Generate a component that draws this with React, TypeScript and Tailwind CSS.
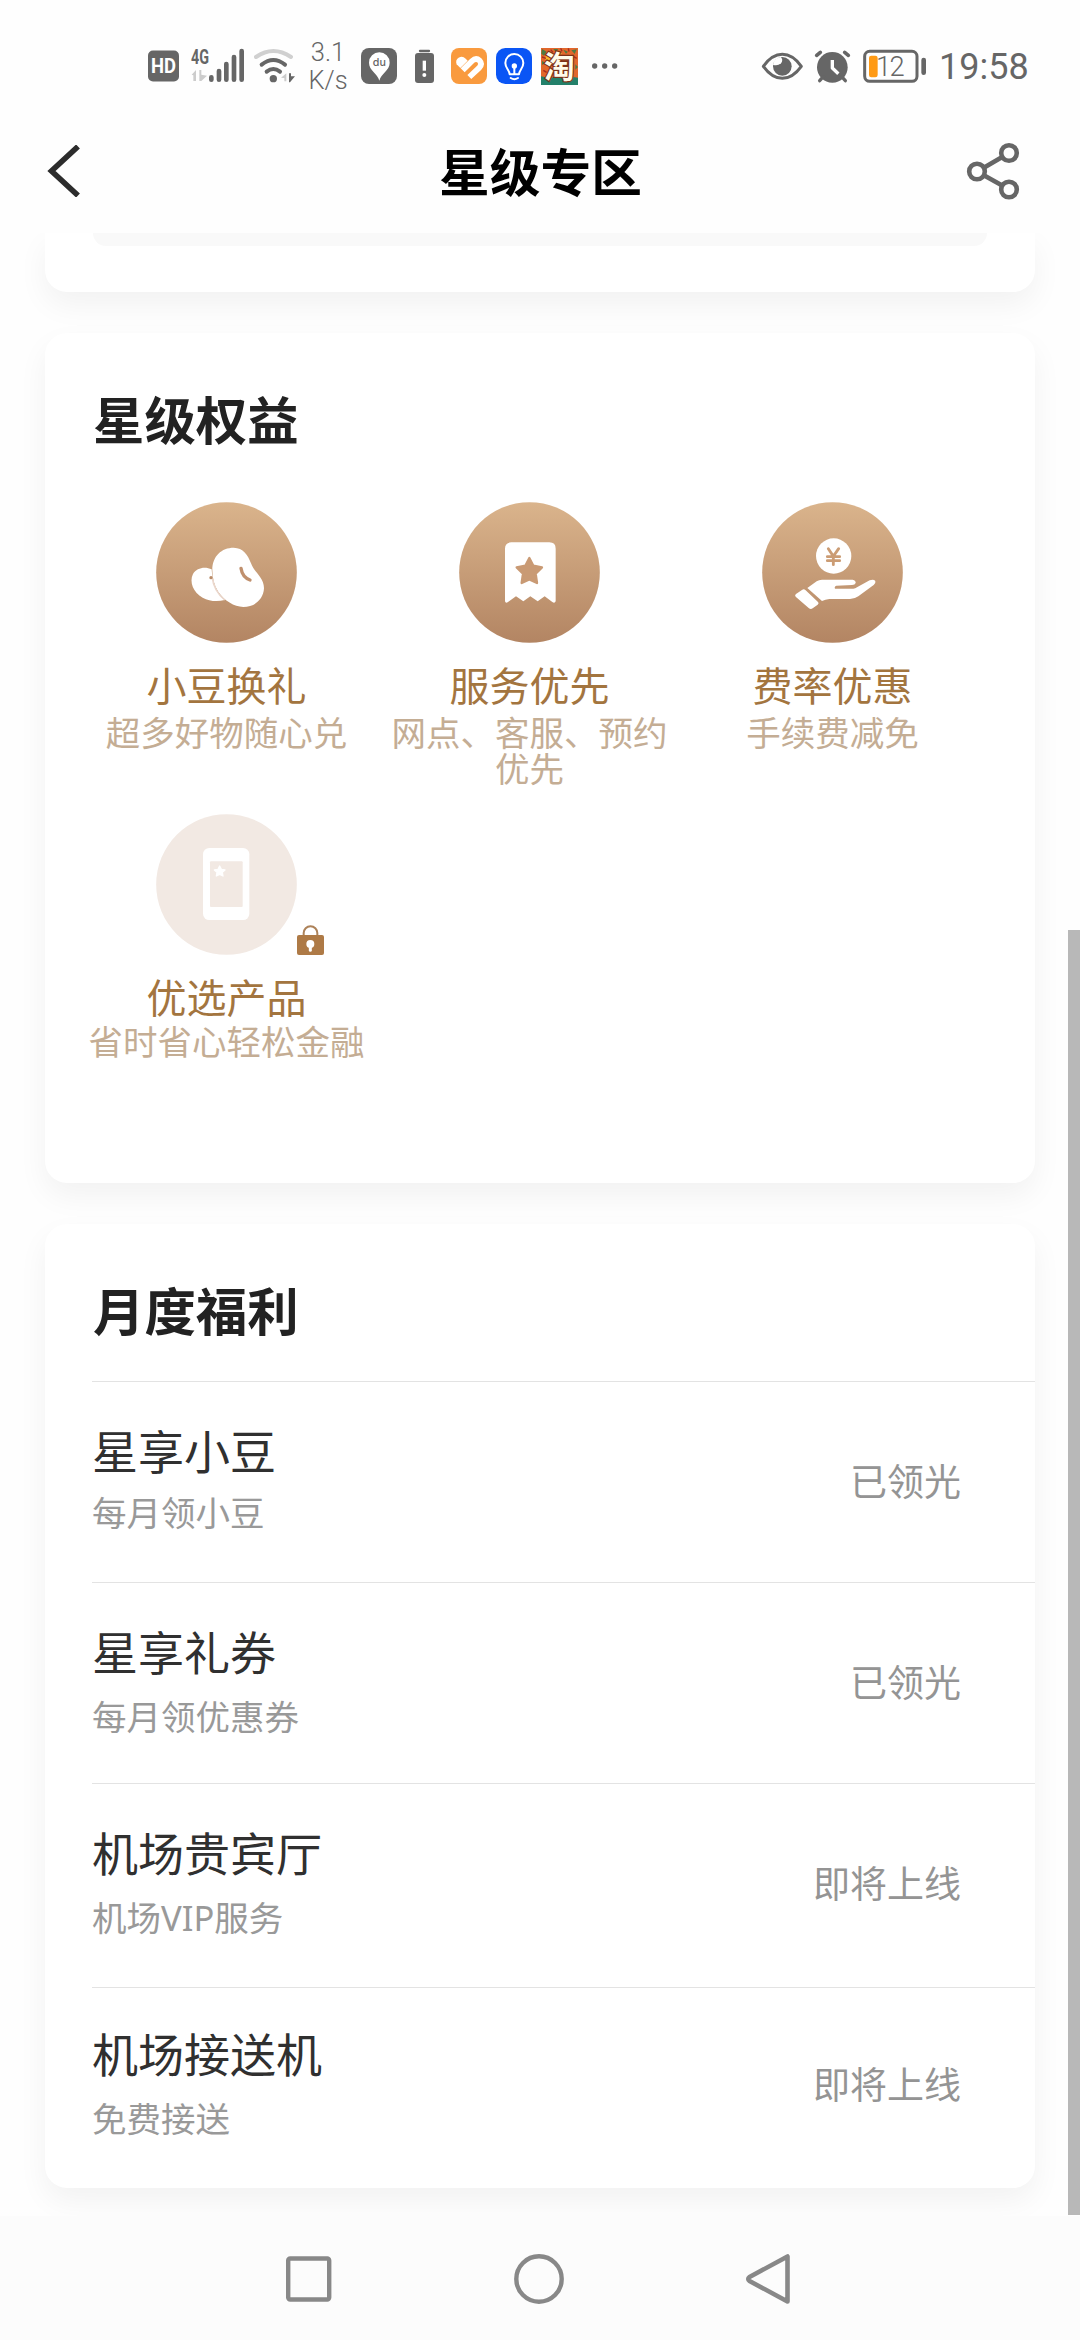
import type { ReactNode } from "react";

const CIRCLE_TOP = "#dab48c";
const CIRCLE_BOTTOM = "#b38563";

function StatusBar() {
  return (
    <div className="flex h-[132px] shrink-0 items-center whitespace-nowrap text-[#666666]">
      <svg className="ml-[148px] h-[32px] w-[31px]" viewBox="0 0 31 32">
        <rect x="0" y="0.5" width="31" height="31" rx="5" fill="#666" />
        <text x="15.5" y="23.4" textAnchor="middle" textLength="25" lengthAdjust="spacingAndGlyphs" fontFamily="Roboto, sans-serif" fontWeight="700" fontSize="20" fill="#fff">HD</text>
      </svg>
      <svg className="ml-[11px] h-[36px] w-[55px] overflow-visible" viewBox="180 54 165 108">
        <text x="183" y="101" textLength="54" lengthAdjust="spacingAndGlyphs" fontFamily="Roboto, sans-serif" fontWeight="700" fontSize="60" fill="#666">4G</text>
        <path d="M185 134 L198 120 V153 H190 V136 Z M208 120 H214 V134 L231 137 L214 153 H208 Z" fill="#ccc" />
        <g stroke="#666" strokeWidth="14" strokeLinecap="round">
          <path d="M244 142V149M267 123V149M289 102V149M312 81V149M335 63V149" />
        </g>
      </svg>
      <svg className="ml-[9px] h-[36px] w-[42px]" viewBox="372 54 126 108" fill="none" strokeLinecap="round">
        <path d="M378 81 Q430 45 483 81" stroke="#d0d0d0" strokeWidth="12" />
        <path d="M395 104 Q430 76 465 104" stroke="#666" strokeWidth="12" />
        <path d="M410 125 Q430 109 450 125" stroke="#666" strokeWidth="12" />
        <circle cx="430" cy="146" r="11" fill="#666" />
        <path d="M453 143 L469 130 V154 H463 V144 Z" fill="#ccc" />
        <path d="M477 130 H483 V139 L495 139 L480 157 H477 Z" fill="#666" />
      </svg>
      <div className="ml-[14px] flex w-[36px] flex-col items-center font-['Roboto'] text-[25.5px] leading-[28px] font-light">
        <span>3.1</span>
        <span>K/s</span>
      </div>
      <svg className="ml-[15px] h-[36px] w-[36px] overflow-visible" viewBox="33 54 108 108">
        <rect x="33" y="54" width="108" height="108" rx="24" fill="#666" />
        <path d="M88 152 C83 130 57 122 57 98 A31 31 0 0 1 119 98 C119 122 93 130 88 152 Z" fill="#fff" />
        <text x="88" y="108" textAnchor="middle" fontFamily="Inter, sans-serif" fontWeight="500" fontSize="32" fill="#666">du</text>
      </svg>
      <svg className="ml-[17px] h-[36px] w-[21px]" viewBox="192 54 63 108">
        <path d="M210 63H237" stroke="#666" strokeWidth="7" strokeLinecap="round" />
        <rect x="195" y="69" width="57" height="90" rx="9" fill="#666" />
        <path d="M223 92V122" stroke="#fff" strokeWidth="10" />
        <circle cx="223" cy="135" r="6" fill="#fff" />
      </svg>
      <svg className="ml-[16px] h-[36px] w-[36px]" viewBox="303 54 108 108">
        <rect x="303" y="54" width="108" height="108" rx="24" fill="#f99a3e" />
        <path d="M320 103 Q315 90 326 83 Q338 77 347 86 L353 92 L331 114 Z" fill="#fff" />
        <path d="M338 121 L366 93 Q378 82 389 92 Q398 102 388 113 L358 141" fill="none" stroke="#fff" strokeWidth="17" />
      </svg>
      <svg className="ml-[9px] h-[36px] w-[36px]" viewBox="438 54 108 108" fill="none">
        <rect x="438" y="54" width="108" height="108" rx="28" fill="#0a55f5" />
        <g stroke="#fff" strokeWidth="6" strokeLinecap="round" strokeLinejoin="round">
          <path d="M479 133 C479 120 466 116 466 99 A27 27 0 0 1 520 99 C520 116 507 120 507 133 Z" />
          <path d="M482 144 Q493 151 504 144" />
          <path d="M493 110V131" />
        </g>
        <circle cx="493" cy="108" r="8" fill="#fff" />
      </svg>
      <svg className="ml-[9px] h-[37px] w-[37px] overflow-visible" viewBox="573 51 111 111">
        <rect x="573" y="51" width="111" height="111" fill="#e2672c" />
        <path d="M573 136 L600 142 L630 132 L684 140 V162 H573 Z" fill="#23806a" />
        <path d="M576 54 l14 8 -8 12 -8 -6z M610 54 h14 l-5 11z M640 56 l14 6 -6 6z M664 58 l16 -3 -6 14z M576 90 l10 5 -10 7z M676 100 l8 8 -8 8z" fill="#4f7b42" />
        <path d="M590 66 l18 10 -14 16 -10 -8z M658 70 l14 4 -4 9z M628 62 l8 6 -8 4z" fill="#f8b52e" />
        <path d="M602 56 l7 8M632 52 l4 9M655 52 l2 10M670 76 l10 6M576 78 l12 4M580 118 l10 6" stroke="#a92d20" strokeWidth="4" />
        <text x="628" y="142" textAnchor="middle" fontFamily="'Noto Sans CJK SC', sans-serif" fontWeight="700" fontSize="92" fill="#fffbea" stroke="#7c3219" strokeWidth="7" paintOrder="stroke">淘</text>
      </svg>
      <svg className="ml-[14px] h-[10px] w-[26px]" viewBox="726 93 78 30" fill="#666">
        <circle cx="734" cy="108" r="8" />
        <circle cx="764" cy="108" r="8" />
        <circle cx="794" cy="108" r="8" />
      </svg>
      <svg className="ml-[143px] h-[36px] w-[42px]" viewBox="63 54 126 108" fill="none">
        <path d="M70 109 Q96 73 127 73 Q158 73 184 109 Q158 145 127 145 Q96 145 70 109 Z" stroke="#666" strokeWidth="9" strokeLinejoin="round" />
        <circle cx="127" cy="109" r="28" fill="#666" />
        <path d="M99 104 A28 28 0 0 1 122 81 Q131 90 123 100 Q112 109 99 104 Z" fill="#fff" />
      </svg>
      <svg className="ml-[11px] h-[36px] w-[37px]" viewBox="222 54 111 108" fill="none" strokeLinecap="round">
        <circle cx="277" cy="112" r="46" fill="#666" />
        <path d="M230 76 L241 67 M325 76 L314 67" stroke="#666" strokeWidth="11" />
        <path d="M239 152 L250 140 M316 152 L305 140" stroke="#666" strokeWidth="10" />
        <path d="M277 90 V114 L295 131" stroke="#fff" strokeWidth="10" strokeLinecap="butt" strokeLinejoin="round" />
      </svg>
      <svg className="ml-[12px] h-[36px] w-[63px]" viewBox="369 54 189 108">
        <rect x="374" y="64" width="157" height="90" rx="15" fill="none" stroke="#666" strokeWidth="9" />
        <rect x="387" y="77" width="26" height="65" rx="7" fill="#ff9a14" />
        <rect x="544" y="83" width="14" height="52" rx="7" fill="#666" />
        <text x="451" y="139" textAnchor="middle" textLength="86" fontFamily="Roboto, sans-serif" fontWeight="300" fontSize="82" fill="#666">12</text>
      </svg>
      <span className="mt-[2px] ml-[13px] font-['Roboto'] text-[36px] leading-[40px]">19:58</span>
    </div>
  );
}

function Header() {
  return (
    <header className="flex h-[101px] shrink-0 items-center justify-between pr-[60px] pb-[24px] pl-[45px]">
      <svg className="h-[52px] w-[54px]" viewBox="0 0 54 52" fill="none">
        <path d="M33 1.5 L6.5 26 L33 50.5" stroke="#2c2c2c" strokeWidth="5.6" />
      </svg>
      <h1 className="mt-[4px] ml-[16px] text-[50.7px] leading-[60px] font-bold text-black">星级专区</h1>
      <svg className="h-[58px] w-[54px]" viewBox="0 0 54 58" fill="none" stroke="#666" strokeWidth="4.6">
        <circle cx="43" cy="11" r="7.8" />
        <circle cx="11" cy="29.5" r="7.8" />
        <circle cx="43" cy="47.5" r="7.8" />
        <path d="M17.8 25.7 L36.2 15 M17.8 33.3 L36.2 43.6" />
      </svg>
    </header>
  );
}

function BeanIcon() {
  return (
    <svg className="h-[141px] w-[141px]" viewBox="228 66 423 423">
      <defs>
        <linearGradient id="bean-bg" x1="0" y1="0" x2="0" y2="1">
          <stop offset="0" stopColor={CIRCLE_TOP} />
          <stop offset="1" stopColor={CIRCLE_BOTTOM} />
        </linearGradient>
      </defs>
      <circle cx="439.5" cy="277.5" r="211" fill="url(#bean-bg)" />
      <path d="M395 268 C375 258 350 263 339 282 C327 306 340 338 368 353 C388 364 412 366 434 360 C412 342 397 310 395 268 Z" fill="#fff" />
      <path d="M397 270 C397 228 425 203 461 203 C490 204 503 224 513 250 C523 278 552 292 552 325 C550 360 522 381 490 381 C462 380 433 362 415 336 C402 315 397 293 397 270 Z" fill="#fff" />
      <path d="M396 290 C399 318 411 341 434 360" fill="none" stroke="#ead6cb" strokeWidth="4" />
      <circle cx="393" cy="293" r="5" fill="#b98b68" />
      <path d="M483 265 Q487 292 510 300" fill="none" stroke="#c0906d" strokeWidth="10" strokeLinecap="round" />
    </svg>
  );
}

function TicketIcon() {
  return (
    <svg className="h-[141px] w-[141px]" viewBox="237 66 423 423">
      <defs>
        <linearGradient id="ticket-bg" x1="0" y1="0" x2="0" y2="1">
          <stop offset="0" stopColor={CIRCLE_TOP} />
          <stop offset="1" stopColor={CIRCLE_BOTTOM} />
        </linearGradient>
      </defs>
      <circle cx="448.5" cy="277.5" r="211" fill="url(#ticket-bg)" />
      <path d="M375 206 Q375 187 394 187 H508 Q527 187 527 206 V364 Q524 371 517 366 L494 349 L473 364 L451 349 L430 364 L408 349 L384 366 Q377 371 375 364 Z" fill="#fff" />
      <path d="M448 234 L460 257 L486 262 L467 281 L471 309 L448 298 L425 309 L429 281 L410 262 L436 257 Z" fill="#c99a74" stroke="#c99a74" strokeWidth="7" strokeLinejoin="round" />
    </svg>
  );
}

function HandIcon() {
  return (
    <svg className="h-[141px] w-[141px]" viewBox="186 66 423 423">
      <defs>
        <linearGradient id="hand-bg" x1="0" y1="0" x2="0" y2="1">
          <stop offset="0" stopColor={CIRCLE_TOP} />
          <stop offset="1" stopColor={CIRCLE_BOTTOM} />
        </linearGradient>
      </defs>
      <circle cx="397.5" cy="277.5" r="211" fill="url(#hand-bg)" />
      <circle cx="401" cy="228" r="53" fill="#fff" />
      <path d="M385 206 L400 229 L416 206 M400 229 V254 M382 230 H419 M382 242 H419" fill="none" stroke="#cb9c74" strokeWidth="8.5" strokeLinecap="round" />
      <path d="M322 324 L350 304 Q357 299 366 299 H458 Q468 301 467 309 Q465 315 456 315 L409 317 Q402 320 405 326 H460 Q466 326 471 322 L509 301 Q521 297 526 303 Q528 309 521 315 L475 349 Q464 357 450 357 H388 Q376 358 366 363 Z" fill="#fff" />
      <path d="M288 342 L307 329 Q312 326 317 331 L354 366 Q358 370 353 374 L338 385 Q332 389 326 384 L287 350 Q283 345 288 342 Z" fill="#fff" />
    </svg>
  );
}

function PhoneIcon() {
  return (
    <svg className="h-[141px] w-[141px]" viewBox="228 72 423 423">
      <circle cx="439.5" cy="283.5" r="211" fill="#f2e9e3" />
      <rect x="369" y="174" width="139" height="216" rx="19" fill="#fff" />
      <rect x="390" y="214" width="98" height="137" rx="3" fill="#f2e9e3" />
      <path d="M419 228 L424 238 L435 240 L427 247 L429 258 L419 253 L409 258 L411 247 L403 240 L414 238 Z" fill="#fff" stroke="#fff" strokeWidth="4" strokeLinejoin="round" />
    </svg>
  );
}

function LockBadge() {
  return (
    <svg className="absolute top-[111px] left-full h-[30px] w-[27px]" viewBox="651 404 81 90">
      <path d="M671 438 V428 A20.5 20.5 0 0 1 712 428 V438" fill="none" stroke="#ad8259" strokeWidth="6" />
      <rect x="651" y="434" width="81" height="60" rx="6" fill="#ae7a46" />
      <circle cx="691" cy="461" r="12" fill="#fff" />
      <path d="M691 465V480" stroke="#fff" strokeWidth="9" strokeLinecap="round" />
    </svg>
  );
}

type Benefit = { name: string; note: string; icon: ReactNode; locked?: boolean };

const benefits: Benefit[] = [
  { name: "小豆换礼", note: "超多好物随心兑", icon: <BeanIcon /> },
  { name: "服务优先", note: "网点、客服、预约优先", icon: <TicketIcon /> },
  { name: "费率优惠", note: "手续费减免", icon: <HandIcon /> },
  { name: "优选产品", note: "省时省心轻松金融", icon: <PhoneIcon />, locked: true },
];

function BenefitsCard() {
  return (
    <section className="h-[850px] rounded-[22px] bg-white pt-[57px] shadow-[0_13px_30px_rgba(0,0,0,0.05)]">
      <h2 className="pl-[48px] text-[51.4px] leading-[60px] font-bold text-[#222222]">星级权益</h2>
      <div className="mt-[52px] grid grid-cols-3 gap-y-[27px] pr-[51px] pl-[30px]">
        {benefits.map((b) => (
          <div key={b.name} className="flex flex-col items-center text-center">
            <div className="relative">
              {b.icon}
              {b.locked && <LockBadge />}
            </div>
            <div className="mt-[23px] text-[40px] leading-[40px] text-[#a3753f]">{b.name}</div>
            <div className={b.locked ? "mt-[6px] text-[34.5px] leading-[36px] text-[#c4ad94]" : "mt-[9px] text-[34.5px] leading-[36px] text-[#c4ad94]"}>
              {b.note}
            </div>
          </div>
        ))}
      </div>
    </section>
  );
}

const perks = [
  { name: "星享小豆", note: "每月领小豆", status: "已领光", row: "h-[201px] pt-[46px]", gap: "mt-[21px]" },
  { name: "星享礼券", note: "每月领优惠券", status: "已领光", row: "h-[201px] pt-[46px]", gap: "mt-[24px]" },
  { name: "机场贵宾厅", note: "机场VIP服务", status: "即将上线", row: "h-[204px] pt-[46px]", gap: "mt-[24px]" },
  { name: "机场接送机", note: "免费接送", status: "即将上线", row: "h-[201px] pt-[43px]", gap: "mt-[24px]" },
];

function PerksCard() {
  return (
    <section className="h-[964px] rounded-[22px] bg-white pt-[57px] shadow-[0_13px_30px_rgba(0,0,0,0.05)]">
      <h2 className="pl-[48px] text-[51.4px] leading-[60px] font-bold text-[#222222]">月度福利</h2>
      <ul className="mt-[40px] ml-[47px]">
        {perks.map((p) => (
          <li key={p.name} className={`flex justify-between border-t border-[#e3e3e3] pr-[74px] ${p.row}`}>
            <div>
              <div className="text-[46px] leading-[46px] text-[#303030]">{p.name}</div>
              <div className={`text-[34.5px] leading-[36px] text-[#999999] ${p.gap}`}>{p.note}</div>
            </div>
            <div className="mt-[35px] text-[37px] leading-[38px] text-[#949494]">{p.status}</div>
          </li>
        ))}
      </ul>
    </section>
  );
}

function NavBar() {
  return (
    <nav className="flex h-[124px] shrink-0 items-center justify-between bg-[#fcfcfc] pt-px pr-[289px] pl-[285px]">
      <svg className="h-[52px] w-[48px]" viewBox="0 0 48 52" fill="none" stroke="#888" strokeWidth="4.4">
        <rect x="3.2" y="5.5" width="41" height="41" rx="2" />
      </svg>
      <svg className="h-[52px] w-[52px]" viewBox="0 0 52 52" fill="none" stroke="#888" strokeWidth="4.4">
        <circle cx="26" cy="26" r="22.7" />
      </svg>
      <svg className="h-[52px] w-[46px]" viewBox="0 0 46 52" fill="none" stroke="#888" strokeWidth="4.6" strokeLinejoin="round">
        <path d="M42.5 3.5 V48.5 L4.5 28 Q2 26 4.5 24 Z" />
      </svg>
    </nav>
  );
}

export default function App() {
  return (
    <div className="flex h-[2340px] w-[1080px] flex-col overflow-hidden bg-[#fefefe] font-['Noto_Sans','Noto_Sans_CJK_SC',sans-serif]">
      <StatusBar />
      <Header />
      <main className="relative flex min-h-0 flex-1 flex-col gap-[41px] overflow-hidden px-[45px]">
        <section className="h-[59px] shrink-0 rounded-b-[22px] bg-white px-[48px] shadow-[0_13px_30px_rgba(0,0,0,0.05)]">
          <div className="h-[13px] rounded-b-[14px] bg-[#f9f9f9]" />
        </section>
        <BenefitsCard />
        <PerksCard />
        <div className="absolute top-[697px] right-0 h-[1285px] w-[12px] bg-[#b8b8b8]" />
      </main>
      <NavBar />
    </div>
  );
}
